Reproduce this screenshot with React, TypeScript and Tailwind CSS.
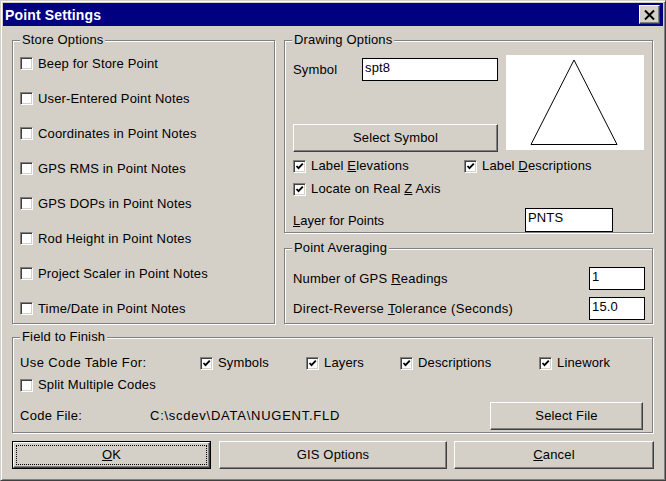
import React from "react";

const face = "bg-[#d4d0c8]";

const raised =
  "border border-t-white border-l-white border-r-[#404040] border-b-[#404040] shadow-[inset_-1px_-1px_0_#808080] bg-[#d4d0c8]";

const Checkbox: React.FC<{ checked?: boolean }> = ({ checked }) => (
  <span className="flex h-[13px] w-[13px] flex-none items-center justify-center border border-t-[#808080] border-l-[#808080] border-r-white border-b-white bg-white shadow-[inset_1px_1px_0_#404040,inset_-1px_-1px_0_#d4d0c8]">
    {checked && (
      <svg width="9" height="9" viewBox="0 0 9 9">
        <path d="M1.5 4 L3.5 6.2 L7.8 1.6" fill="none" stroke="#000" strokeWidth="1.8" />
      </svg>
    )}
  </span>
);

const CheckItem: React.FC<{ checked?: boolean; children: React.ReactNode; className?: string }> = ({
  checked,
  children,
  className = "",
}) => (
  <div className={`flex items-center gap-[5px] ${className}`}>
    <Checkbox checked={checked} />
    <span className="whitespace-nowrap">{children}</span>
  </div>
);

const GroupBox: React.FC<{ title: string; className?: string; children: React.ReactNode }> = ({
  title,
  className = "",
  children,
}) => (
  <div
    className={`relative flex-none border border-[#808080] shadow-[inset_1px_1px_0_#fff,1px_1px_0_#fff] ${className}`}
  >
    <span className={`absolute left-[7px] top-[-9px] ${face} px-[2px] leading-[16px]`}>{title}</span>
    {children}
  </div>
);

const TextBox: React.FC<{ value: string; className?: string }> = ({ value, className = "" }) => (
  <div className={`flex-none border border-black bg-white pl-[2px] pt-[1px] leading-[16px] ${className}`}>
    {value}
  </div>
);

const Btn: React.FC<{ children: React.ReactNode; className?: string }> = ({ children, className = "" }) => (
  <div className={`flex flex-none items-center justify-center ${raised} ${className}`}>{children}</div>
);

const storeOptions = [
  "Beep for Store Point",
  "User-Entered Point Notes",
  "Coordinates in Point Notes",
  "GPS RMS in Point Notes",
  "GPS DOPs in Point Notes",
  "Rod Height in Point Notes",
  "Project Scaler in Point Notes",
  "Time/Date in Point Notes",
];

export default function App() {
  return (
    <div
      className={`flex h-[481px] w-[666px] flex-col border border-t-[#d4d0c8] border-l-[#d4d0c8] border-r-[#404040] border-b-[#404040] p-[2px] text-[13px] tracking-[0.15px] text-black shadow-[inset_1px_1px_0_#fff,inset_-1px_-1px_0_#808080] ${face}`}
      style={{ fontFamily: '"Liberation Sans", Arial, sans-serif' }}
    >
      {/* title bar */}
      <div className="flex h-[23px] flex-none items-center justify-between bg-[#000080] pl-[2px] pr-[3px]">
        <span className="text-[14px] font-bold leading-[16px] tracking-[0.15px] text-white">Point Settings</span>
        <div className={`flex h-[19px] w-[21px] items-center justify-center ${raised}`}>
          <svg width="11" height="10" viewBox="0 0 11 10">
            <path d="M1 0.5 L10 9.5 M10 0.5 L1 9.5" stroke="#000" strokeWidth="2" />
          </svg>
        </div>
      </div>

      <div className="flex flex-col px-[9px] pt-[14px]">
        <div className="flex gap-[9px]">
          {/* Store Options */}
          <GroupBox title="Store Options" className="h-[284px] w-[263px] pl-[7px] pt-[5px]">
            {storeOptions.map((o) => (
              <CheckItem key={o} className="h-[35px]">
                {o}
              </CheckItem>
            ))}
          </GroupBox>

          <div className="flex w-[369px] flex-none flex-col gap-[15px]">
            {/* Drawing Options */}
            <GroupBox title="Drawing Options" className="h-[193px] pl-[8px] pt-[14px]">
              <div className="flex gap-[8px]">
                <div className="flex w-[205px] flex-col pt-[3px]">
                  <div className="flex items-center">
                    <span className="w-[69px]">Symbol</span>
                    <TextBox value="spt8" className="h-[23px] w-[136px]" />
                  </div>
                  <Btn className="mt-[43px] h-[28px] w-[205px]">Select Symbol</Btn>
                </div>
                <div className="h-[95px] w-[138px] flex-none bg-white">
                  <svg width="138" height="95" viewBox="0 0 138 95">
                    <path d="M68 5 L25 89.5 L111 89.5 Z" fill="none" stroke="#000" strokeWidth="1" />
                  </svg>
                </div>
              </div>
              <div className="mt-[4px] flex h-[20px] items-center">
                <CheckItem checked className="w-[171px]">
                  Label <u>E</u>levations
                </CheckItem>
                <CheckItem checked>
                  Label <u>D</u>escriptions
                </CheckItem>
              </div>
              <div className="mt-[3px] flex h-[20px] items-center">
                <CheckItem checked>
                  Locate on Real <u>Z</u> Axis
                </CheckItem>
              </div>
              <div className="mt-[9px] flex items-center">
                <span className="w-[232px] pt-[2px] tracking-normal">
                  <u>L</u>ayer for Points
                </span>
                <TextBox value="PNTS" className="h-[24px] w-[88px]" />
              </div>
            </GroupBox>

            {/* Point Averaging */}
            <GroupBox title="Point Averaging" className="h-[76px] pl-[8px] pt-[18px]">
              <div className="flex items-center">
                <span className="w-[296px] tracking-[0.2px]">
                  Number of GPS <u>R</u>eadings
                </span>
                <TextBox value="1" className="h-[23px] w-[56px]" />
              </div>
              <div className="mt-[7px] flex items-center">
                <span className="w-[296px] tracking-[0.32px]">
                  Direct-Reverse <u>T</u>olerance (Seconds)
                </span>
                <TextBox value="15.0" className="h-[23px] w-[56px]" />
              </div>
            </GroupBox>
          </div>
        </div>

        {/* Field to Finish */}
        <GroupBox title="Field to Finish" className="mt-[13px] h-[96px] w-[641px] pl-[7px] pt-[15px]">
          <div className="flex h-[20px] items-center">
            <span className="w-[180px] tracking-[0.4px]">Use Code Table For:</span>
            <CheckItem checked className="w-[106px]">
              Symbols
            </CheckItem>
            <CheckItem checked className="w-[94px]">
              Layers
            </CheckItem>
            <CheckItem checked className="w-[139px]">
              Descriptions
            </CheckItem>
            <CheckItem checked>Linework</CheckItem>
          </div>
          <div className="mt-[2px] flex h-[20px] items-center">
            <CheckItem>Split Multiple Codes</CheckItem>
          </div>
          <div className="mt-[7px] flex items-center">
            <span className="w-[130px] tracking-[0.3px]">Code File:</span>
            <span className="w-[340px] tracking-[0.75px]">C:\scdev\DATA\NUGENT.FLD</span>
            <Btn className="h-[28px] w-[153px]">Select File</Btn>
          </div>
        </GroupBox>

        {/* bottom buttons */}
        <div className="mt-[8px] flex">
          <div className="flex h-[28px] w-[199px] flex-none border border-black">
            <div className={`flex flex-1 items-center justify-center p-[2px] ${raised}`}>
              <div className="flex h-full w-full items-center justify-center border border-dotted border-black">
                <span>
                  <u>O</u>K
                </span>
              </div>
            </div>
          </div>
          <Btn className="ml-[8px] h-[28px] w-[228px]">GIS Options</Btn>
          <Btn className="ml-[7px] h-[28px] w-[200px]">
            <span>
              <u>C</u>ancel
            </span>
          </Btn>
        </div>
      </div>
    </div>
  );
}
